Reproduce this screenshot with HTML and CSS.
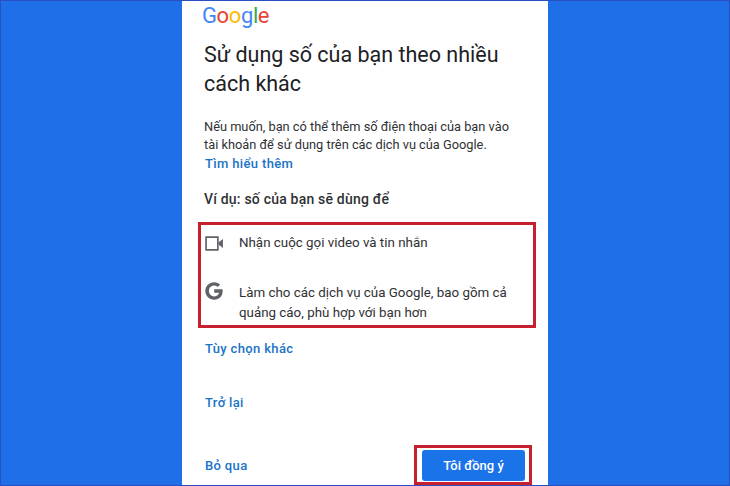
FILE: index.html
```html
<!DOCTYPE html>
<html lang="vi">
<head>
<meta charset="utf-8">
<title>Google</title>
<link rel="stylesheet" href="styles.css">
</head>
<body>
<main class="phone">
  <div class="logo"><span class="g-blue">G</span><span class="g-red">o</span><span class="g-yellow">o</span><span class="g-blue">g</span><span class="g-green">l</span><span class="g-red">e</span></div>
  <h1 class="title">Sử dụng số của bạn theo nhiều cách khác</h1>
  <p class="body">Nếu muốn, bạn có thể thêm số điện thoại của bạn vào tài khoản để sử dụng trên các dịch vụ của Google.</p>
  <a class="link learn">Tìm hiểu thêm</a>
  <h2 class="sub">Ví dụ: số của bạn sẽ dùng để</h2>
  <section class="box">
    <div class="row video">
      <svg class="icon" viewBox="0 0 20 16" width="19" height="15"><path d="M1 1.200h12.600v13.600H1z" fill="none" stroke="#5f6368" stroke-width="1.800"/><path d="M14.500 6.600 19 3.200v9.600l-4.500-3.400z" fill="#5f6368"/></svg>
      <span>Nhận cuộc gọi video và tin nhắn</span>
    </div>
    <div class="row gplus">
      <svg class="icon" viewBox="0 0 18 18" width="18" height="18"><path d="M9.200 7.300h8.300c.1.500.2 1.100.2 1.800 0 5-3.400 8.600-8.500 8.600C4.300 17.700.3 13.800.3 9S4.300.3 9.200.3c2.400 0 4.400.9 5.900 2.300l-2.500 2.400c-.7-.6-1.800-1.400-3.400-1.400-2.900 0-5.300 2.400-5.300 5.400s2.400 5.400 5.300 5.400c3.300 0 4.600-2.400 4.800-3.600H9.200z" fill="#5f6368"/></svg>
      <span>Làm cho các dịch vụ của Google, bao gồm cả quảng cáo, phù hợp với bạn hơn</span>
    </div>
  </section>
  <a class="link more">Tùy chọn khác</a>
  <a class="link back">Trở lại</a>
  <footer class="foot">
    <a class="link">Bỏ qua</a>
    <div class="btn-frame"><button class="btn">Tôi đồng ý</button></div>
  </footer>
</main>
</body>
</html>
```
FILE: styles.css
```css
* { box-sizing: border-box; }
html, body { margin: 0; height: 486px; overflow: hidden; }
body {
  background: #1f6fe8;
  border: 1px solid #2a4fc0;
  display: flex;
  justify-content: center;
  font-family: Roboto, "Noto Sans", sans-serif;
  color: #202124;
}
.phone {
  width: 366px;
  height: 484px;
  background: #fff;
  padding: 0 0 0 22px;
  display: flex;
  flex-direction: column;
  align-items: flex-start;
}
.logo {
  font-family: Roboto, sans-serif;
  font-size: 22px;
  line-height: 30px;
  letter-spacing: -0.4px;
  margin-left: -2px;
}
.g-blue { color: #4285f4; }
.g-red { color: #ea4335; }
.g-yellow { color: #fbbc05; }
.g-green { color: #34a853; }
.title {
  margin: 9px 0 0;
  width: 330px;
  font-size: 21.500px;
  font-weight: 400;
  line-height: 29px;
  color: #202124;
}
.body {
  margin: 20px 0 0;
  width: 318px;
  font-size: 12.800px;
  line-height: 18px;
  color: #2f3134;
}
.link {
  font-size: 13px;
  font-weight: 500;
  color: #1a73c8;
  letter-spacing: 0.35px;
}
.learn { margin-top: 1px; line-height: 18px; margin-left: 1px; }
.sub {
  margin: 17px 0 0;
  font-size: 14px;
  line-height: 18px;
  font-weight: 500;
  color: #2f3134;
  letter-spacing: 0.2px;
}
.box {
  width: 338px;
  height: 106px;
  margin: 14px 0 0 -6px;
  border: 3px solid #c8202f;
  padding: 0 0 0 4px;
  font-size: 13.350px;
  line-height: 20px;
  color: #2f3134;
}
.row { display: flex; align-items: flex-start; gap: 15px; }
.row .icon { flex: none; }
.video { margin-top: 8px; align-items: center; height: 20px; }
.gplus { margin-top: 30px; }
.gplus .icon { margin-top: -1px; margin-right: 1px; }
.gplus span { width: 280px; }
.more { margin: 12px 0 0 1px; line-height: 18px; }
.back { margin: 36px 0 0 1px; line-height: 18px; }
.foot {
  width: 328px;
  margin-top: 33px;
  display: flex;
  justify-content: space-between;
  align-items: flex-start;
  padding-left: 1px;
}
.foot .link { margin-top: 12px; line-height: 18px; }
.btn-frame {
  width: 118px;
  height: 40px;
  border: 3px solid #c8202f;
  padding: 2px 0 0 5px;
}
.btn {
  display: block;
  width: 103px;
  height: 31px;
  border: 0;
  border-radius: 3px;
  background: #1a73e8;
  color: #fff;
  font-family: Roboto, sans-serif;
  font-size: 13px;
  font-weight: 500;
  padding: 0;
}
```
